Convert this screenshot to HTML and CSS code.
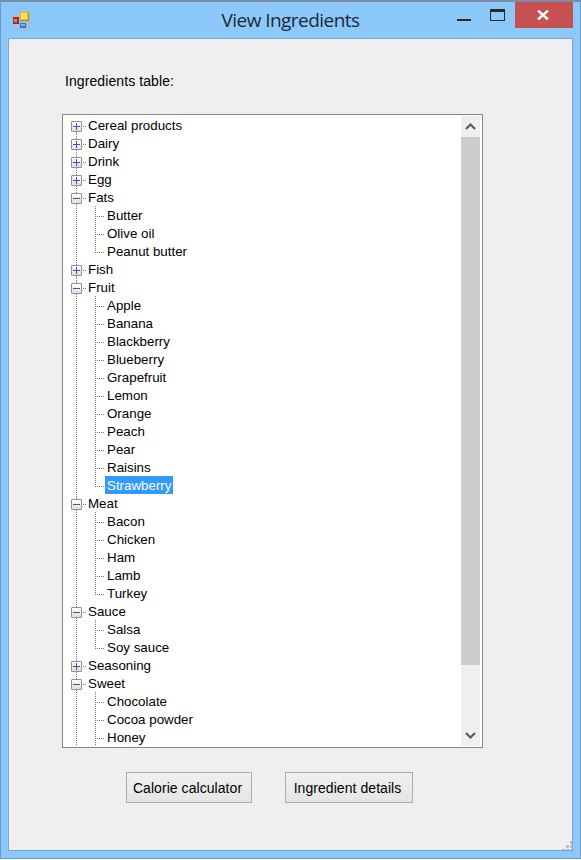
FILE: index.html
```html
<!DOCTYPE html>
<html lang="en">
<head>
<meta charset="utf-8">
<title>View Ingredients</title>
<link rel="stylesheet" href="styles.css">
</head>
<body>
<div class="window">
  <header class="titlebar">
    <svg class="app-icon" width="18" height="18" viewBox="0 0 18 18" shape-rendering="crispEdges">
      <path d="M.5.5h7v5h-7zM.5 12.5h7v5h-7zM7.5.5h10v10h-10zM7.5 10.5h7v7h-7zM14.500 10.500h3v7h-3z" fill="none" stroke="#a9b9c6"/>
      <rect x="1" y="6" width="6" height="7" fill="#a52c24"/><rect x="2" y="8" width="3" height="3" fill="#ee7567"/>
      <rect x="8" y="1" width="9" height="9" fill="#b88a12"/><rect x="8" y="1" width="8" height="8" fill="#e9bd22"/><rect x="9" y="2" width="6" height="6" fill="#ffe16c"/>
      <rect x="8" y="12" width="6" height="5" fill="#4270d0"/><rect x="9" y="13" width="4" height="2" fill="#83acf5"/>
    </svg>
    <h1 class="title">View Ingredients</h1>
    <div class="controls">
      <svg width="58" height="26" viewBox="0 0 58 26" shape-rendering="crispEdges"><path d="M0 17h14v2H0zM33 7h15v12H33zM34 10v8h13v-8z" fill="#282828" fill-rule="evenodd"/></svg>
      <div class="close"><svg width="12" height="10" viewBox="0 0 12 10"><path d="M1 .5 11 9.500M11 .5 1 9.500" stroke="#fff" stroke-width="2.400"/></svg></div>
    </div>
  </header>
  <main class="client">
    <div class="caption">Ingredients table:</div>
    <div class="listbox">
      <ul class="tree">
        <li class="node plus first"><span>Cereal products</span></li>
        <li class="node plus"><span>Dairy</span></li>
        <li class="node plus"><span>Drink</span></li>
        <li class="node plus"><span>Egg</span></li>
        <li class="node"><span>Fats</span></li>
        <li class="leaf"><span>Butter</span></li>
        <li class="leaf"><span>Olive oil</span></li>
        <li class="leaf last"><span>Peanut butter</span></li>
        <li class="node plus"><span>Fish</span></li>
        <li class="node"><span>Fruit</span></li>
        <li class="leaf"><span>Apple</span></li>
        <li class="leaf"><span>Banana</span></li>
        <li class="leaf"><span>Blackberry</span></li>
        <li class="leaf"><span>Blueberry</span></li>
        <li class="leaf"><span>Grapefruit</span></li>
        <li class="leaf"><span>Lemon</span></li>
        <li class="leaf"><span>Orange</span></li>
        <li class="leaf"><span>Peach</span></li>
        <li class="leaf"><span>Pear</span></li>
        <li class="leaf"><span>Raisins</span></li>
        <li class="leaf last selected"><span>Strawberry</span></li>
        <li class="node"><span>Meat</span></li>
        <li class="leaf"><span>Bacon</span></li>
        <li class="leaf"><span>Chicken</span></li>
        <li class="leaf"><span>Ham</span></li>
        <li class="leaf"><span>Lamb</span></li>
        <li class="leaf last"><span>Turkey</span></li>
        <li class="node"><span>Sauce</span></li>
        <li class="leaf"><span>Salsa</span></li>
        <li class="leaf last"><span>Soy sauce</span></li>
        <li class="node plus"><span>Seasoning</span></li>
        <li class="node"><span>Sweet</span></li>
        <li class="leaf"><span>Chocolate</span></li>
        <li class="leaf"><span>Cocoa powder</span></li>
        <li class="leaf"><span>Honey</span></li>
      </ul>
      <div class="scrollbar">
        <svg width="19" height="21" viewBox="0 0 19 21"><path d="M5 13 9.500 8.500l4.500 4.500" fill="none" stroke="#585858" stroke-width="2.100"/></svg>
        <div class="thumb"></div>
        <svg class="down" width="19" height="21" viewBox="0 0 19 21"><path d="M5 8l4.500 4.500L14 8" fill="none" stroke="#585858" stroke-width="2.100"/></svg>
      </div>
    </div>
    <div class="actions">
      <button class="button">Calorie calculator</button>
      <button class="button wide">Ingredient details</button>
    </div>
    <svg class="grip" width="10" height="10" viewBox="0 0 10 10" shape-rendering="crispEdges"><path d="M8 1h2v3H8zM4 5h3v3H4zM8 5h2v3H8zM0 9h3v1H0zM4 9h3v1H4zM8 9h2v1H8z" fill="#bdbdbd"/></svg>
  </main>
</div>
</body>
</html>
```
FILE: styles.css
```css
*, *::before { box-sizing: border-box; }
body {
  margin: 0;
  background: #fff;
  font-family: "Liberation Sans", Arial, sans-serif;
  color: #000;
}
.window {
  width: 581px;
  height: 859px;
  padding: 0 7px 7px;
  background: #8dc8fb;
  border: 1px solid #6a9cc9;
  border-top: 2px solid #7b8ea6;
}
.titlebar {
  display: grid;
  grid-template-columns: 120px 1fr 120px;
  height: 36px;
}
.app-icon { margin: 9px 0 0 4px; }
.title {
  margin: 5px 0 0;
  font: 400 19px/26px "Open Sans", sans-serif;
  letter-spacing: -0.55px;
  text-align: center;
  white-space: nowrap;
  color: #1c2833;
}
.controls { display: flex; justify-content: flex-end; }
.close {
  display: flex;
  align-items: center;
  justify-content: center;
  width: 58px;
  height: 26px;
  padding-right: 2px;
  background: #c75050;
}
.client {
  position: relative;
  display: flex;
  flex-direction: column;
  height: 813px;
  padding: 33px 0 0 53px;
  border: 1px solid #75a8d5;
  background: #efefef;
}
.caption {
  height: 42px;
  padding-left: 3px;
  font-size: 14px;
  line-height: 18px;
  letter-spacing: 0.09px;
}
.listbox {
  display: flex;
  justify-content: space-between;
  width: 421px;
  height: 634px;
  padding: 1px;
  overflow: hidden;
  border: 1px solid #828790;
  background: #fff;
}
.tree {
  flex: 1;
  margin: 0;
  padding: 0 0 0 7px;
  height: 630px;
  overflow: hidden;
  list-style: none;
  font-size: 13.333px;
  line-height: 20px;
}
.node, .leaf {
  display: flex;
  height: 18px;
  white-space: nowrap;
  background: repeating-linear-gradient(to bottom, #777 0 1px, transparent 1px 2px) 5px 0 / 1px 18px no-repeat;
}
.node.first { background-position: 5px 10px; }
.node::before {
  content: "";
  flex: none;
  width: 11px;
  height: 11px;
  margin: 5px 0 0;
  border: 1px solid #919191;
  border-radius: 1px;
  background:
    linear-gradient(#4058a0, #4058a0) center / 7px 1px no-repeat,
    linear-gradient(#fff, #dedede);
}
.node.plus::before {
  background:
    linear-gradient(#4058a0, #4058a0) center / 7px 1px no-repeat,
    linear-gradient(#4058a0, #4058a0) center / 1px 7px no-repeat,
    linear-gradient(#fff, #dedede);
}
.node span {
  padding-left: 6px;
  background: repeating-linear-gradient(to right, transparent 0 1px, #777 1px 2px) 0 10px / 4px 1px no-repeat;
}
.leaf::before {
  content: "";
  flex: none;
  width: 10px;
  height: 18px;
  margin-left: 24px;
  background:
    repeating-linear-gradient(to bottom, #777 0 1px, transparent 1px 2px) 0 0 / 1px 18px no-repeat,
    repeating-linear-gradient(to right, #777 0 1px, transparent 1px 2px) 0 10px / 9px 1px no-repeat;
}
.leaf.last::before { background-size: 1px 11px, 9px 1px; }
.leaf span { height: 18px; padding: 0 2px; }
.selected span { width: 68px; background: #3399ff; color: #fff; }
.scrollbar {
  display: flex;
  flex-direction: column;
  width: 20px;
  background: #efefef;
  border-right: 1px solid #fff;
}
.thumb { height: 528px; background: #cdcdcd; }
.down { margin-top: auto; }
.actions { display: flex; gap: 33px; padding: 24px 0 0 64px; }
.button {
  width: 126px;
  height: 31px;
  padding: 1px 0 0;
  border: 1px solid #acacac;
  border-radius: 0;
  background: linear-gradient(#f0f0f0, #e5e5e5);
  font: 14px/18px "Liberation Sans", Arial, sans-serif;
  letter-spacing: 0.06px;
  text-indent: -3px;
  color: #000;
}
.button.wide { width: 128px; text-indent: -3px; }
.grip { position: absolute; right: 0; bottom: 0; }
```
